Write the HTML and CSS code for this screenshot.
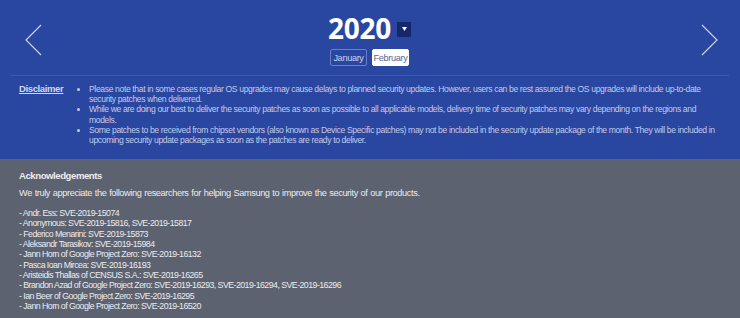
FILE: index.html
```html
<!DOCTYPE html>
<html lang="en">
<head>
<meta charset="UTF-8">
<meta name="viewport" content="width=device-width, initial-scale=1.0">
<title>Security Updates</title>
<link rel="stylesheet" href="styles.css">
</head>
<body>

<section class="hero">
    <div class="nav-row">
        <button class="arrow">
            <svg width="17" height="32" viewBox="0 0 17 32"><polyline points="16,1 1,16 16,31" fill="none" stroke="#c9d2ee" stroke-width="1.2"/></svg>
        </button>
        <div class="picker">
            <div class="year-line">
                <span class="year">2020</span>
                <span class="year-drop"><svg width="5" height="4" viewBox="0 0 5 4"><polygon points="0,0 5,0 2.5,4" fill="#fff"/></svg></span>
            </div>
            <div class="months">
                <button class="month">January</button>
                <button class="month active">February</button>
            </div>
        </div>
        <button class="arrow">
            <svg width="17" height="32" viewBox="0 0 17 32"><polyline points="1,1 16,16 1,31" fill="none" stroke="#c9d2ee" stroke-width="1.2"/></svg>
        </button>
    </div>
    <hr class="divider">
    <div class="disclaimer">
        <a class="disclaimer-title">Disclaimer</a>
        <ul>
            <li>Please note that in some cases regular OS upgrades may cause delays to planned security updates. However, users can be rest assured the OS upgrades will include up-to-date security patches when delivered.</li>
            <li>While we are doing our best to deliver the security patches as soon as possible to all applicable models, delivery time of security patches may vary depending on the regions and models.</li>
            <li>Some patches to be received from chipset vendors (also known as Device Specific patches) may not be included in the security update package of the month. They will be included in upcoming security update packages as soon as the patches are ready to deliver.</li>
        </ul>
    </div>
</section>

<section class="ack">
    <h3>Acknowledgements</h3>
    <p class="ack-intro">We truly appreciate the following researchers for helping Samsung to improve the security of our products.</p>
    <p class="ack-list">
        - Andr. Ess: SVE-2019-15074<br>
        - Anonymous: SVE-2019-15816, SVE-2019-15817<br>
        - Federico Menarini: SVE-2019-15873<br>
        - Aleksandr Tarasikov: SVE-2019-15984<br>
        - Jann Horn of Google Project Zero: SVE-2019-16132<br>
        - Pasca Ioan Mircea: SVE-2019-16193<br>
        - Aristeidis Thallas of CENSUS S.A.: SVE-2019-16265<br>
        - Brandon Azad of Google Project Zero: SVE-2019-16293, SVE-2019-16294, SVE-2019-16296<br>
        - Ian Beer of Google Project Zero: SVE-2019-16295<br>
        - Jann Horn of Google Project Zero: SVE-2019-16520
    </p>
</section>

</body>
</html>
```

FILE: styles.css
```css
body {
    margin: 0;
    padding: 0;
    background-color: #5c6270;
    font-family: "Liberation Sans", sans-serif;
    letter-spacing: -0.37px;
}
.hero {
    background-color: #2946a0;
    padding: 0 11px 14px 10px;
}
.nav-row {
    display: flex;
    align-items: flex-start;
    justify-content: space-between;
    height: 75px;
    padding: 0 11px 0 15px;
}
.arrow {
    background: none;
    border: none;
    padding: 0;
    margin-top: 24px;
    cursor: pointer;
}
.picker {
    display: flex;
    flex-direction: column;
    align-items: center;
    padding-top: 10px;
    margin-right: 4px;
}
.year-line {
    display: flex;
    align-items: center;
    gap: 6px;
}
.year {
    color: #fff;
    font-family: "Open Sans", sans-serif;
    font-weight: 700;
    font-size: 28px;
    letter-spacing: -0.2px;
    line-height: 36px;
}
.year-drop {
    display: flex;
    align-items: center;
    justify-content: center;
    width: 14px;
    height: 15px;
    margin-top: 2px;
    background-color: #15286e;
}
.months {
    display: flex;
    gap: 5px;
    margin-top: 3px;
}
.month {
    font-family: inherit;
    font-size: 9.2px;
    letter-spacing: -0.35px;
    height: 17px;
    width: 37px;
    padding: 0;
    border: 1px solid #6a7fc4;
    border-radius: 2px;
    background: none;
    color: #c9d2ee;
}
.month.active {
    background-color: #fff;
    border-color: #fff;
    color: #5a6592;
}
.divider {
    border: none;
    height: 1px;
    background-color: #3a58b4;
    margin: 0 0 8px 0;
}
.disclaimer {
    display: flex;
    padding: 0 8px 0 9px;
    color: #c3cbe8;
    font-size: 8.6px;
    letter-spacing: -0.37px;
    line-height: 10.2px;
}
.disclaimer-title {
    width: 62px;
    flex-shrink: 0;
    font-weight: 700;
    font-size: 9.5px;
    letter-spacing: -0.37px;
    text-decoration: underline;
    color: #d2d8ee;
}
.disclaimer ul {
    margin: 0;
    padding-left: 8px;
}
.ack {
    padding: 12px 19px 10px 19px;
    color: #ececef;
    font-size: 9.2px;
    letter-spacing: -0.38px;
    line-height: 10.35px;
}
.ack h3 {
    margin: 0 0 6px 0;
    font-size: 9.6px;
    letter-spacing: -0.45px;
}
.ack p {
    margin: 0 0 10px 0;
}
.ack .ack-intro {
    word-spacing: 0.6px;
}
.ack .ack-list {
    font-size: 8.8px;
    letter-spacing: -0.55px;
}
```
